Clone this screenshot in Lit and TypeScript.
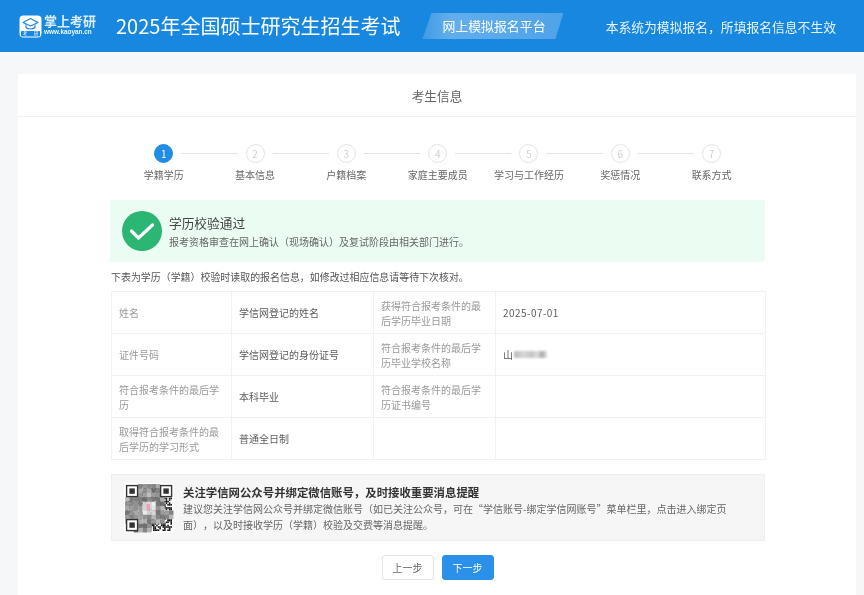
import { LitElement, html, css, svg } from 'lit';
import { customElement } from 'lit/decorators.js';

const STEPS = ['学籍学历', '基本信息', '户籍档案', '家庭主要成员', '学习与工作经历', '奖惩情况', '联系方式'];

const ROWS = [
  ['姓名', '学信网登记的姓名', '获得符合报考条件的最后学历毕业日期', '2025-07-01'],
  ['证件号码', '学信网登记的身份证号', '符合报考条件的最后学历毕业学校名称', 'blur'],
  ['符合报考条件的最后学历', '本科毕业', '符合报考条件的最后学历证书编号', ''],
  ['取得符合报考条件的最后学历的学习形式', '普通全日制', '', ''],
];

// pseudo random, so the code looks the same on every render
function noise(x: number, y: number) {
  const v = Math.sin(x * 12.9898 + y * 78.233) * 43758.5453;
  return v - Math.floor(v);
}

function qrCells() {
  const size = 29;
  const cell = 46 / size;
  const out = [];
  const inFinder = (x: number, y: number) =>
    (x < 8 && y < 8) || (x >= size - 8 && y < 8) || (x < 8 && y >= size - 8);

  for (let y = 0; y < size; y++) {
    for (let x = 0; x < size; x++) {
      if (inFinder(x, y)) continue;
      if (noise(x, y) > 0.5) {
        out.push(svg`<rect x=${2 + x * cell} y=${2 + y * cell} width=${cell} height=${cell} fill="#111"></rect>`);
      }
    }
  }
  // the pixelated part over the code: a cross of grey blocks, light in the middle
  const block = 4.4;
  for (let y = 0; y < 11; y++) {
    for (let x = 0; x < 11; x++) {
      const dx = Math.abs(x - 5);
      const dy = Math.abs(y - 5);
      const band = dx < 4 && dy < 4;
      const arm = (y < 2 && x > 2 && x < 8) || (x < 2 && y > 2 && y < 9) || (y > 7 && x > 1 && x < 6) || (x > 8 && y > 5 && y < 8);
      if (!band && !arm) continue;
      const centre = dx < 2 && dy < 2;
      const g = centre ? 205 + Math.round(noise(x, y) * 35) : Math.round(105 + noise(x + 3, y + 9) * 85);
      out.push(svg`<rect x=${1 + x * block} y=${1 + y * block} width=${block + 0.1} height=${block + 0.1} fill=${`rgb(${g},${g},${g})`}></rect>`);
    }
  }
  out.push(svg`<rect x="22.6" y="21" width="3.4" height="6" fill="#f0a0b4"></rect>`);
  return out;
}

function finder(x: number, y: number) {
  return svg`
    <rect x=${x + 0.6} y=${y + 0.6} width="11" height="11" fill="#fff" stroke="#333" stroke-width="1.4"></rect>
    <rect x=${x + 3.4} y=${y + 3.4} width="5.4" height="5.4" fill="#333"></rect>`;
}

@customElement('app-root')
export class AppRoot extends LitElement {
  static styles = css`
    :host {
      display: block;
      height: 595px;
      overflow: hidden;
      background: #f6f7f8;
      font-family: "Noto Sans CJK SC", "Liberation Sans", sans-serif;
      color: #555;
      text-spacing-trim: space-all;
      filter: blur(0.3px);
    }

    .top {
      display: flex;
      align-items: center;
      height: 52px;
      padding: 0 28px 0 19px;
      box-sizing: border-box;
      background: #1787e0;
      color: #fff;
    }

    .logo {
      display: flex;
      align-items: center;
      gap: 2px;
      width: 97px;
      flex: none;
    }

    .logo svg {
      width: 23px;
      height: 23px;
      flex: none;
    }

    .logo-text {
      display: flex;
      flex-direction: column;
      gap: 1px;
      width: 52px;
      margin-bottom: 2px;
    }

    .logo-name {
      font-size: 13px;
      line-height: 12px;
      font-weight: 700;
      white-space: nowrap;
      color: #dcedfb;
    }

    .logo-url {
      font-family: "Liberation Sans", sans-serif;
      font-size: 6.4px;
      line-height: 8px;
      font-weight: 700;
      white-space: nowrap;
      color: #eef6fd;
    }

    .title {
      font-size: 20px;
      line-height: 28px;
      white-space: nowrap;
    }

    .tag {
      width: 141px;
      height: 26px;
      margin: 0 0 0 22px;
      padding-left: 20px;
      box-sizing: border-box;
      font-size: 12.9px;
      line-height: 26px;
      white-space: nowrap;
      background: linear-gradient(90deg, #3f9ae6, #62aeec 20%, #4fa3e9);
      clip-path: polygon(9px 0, 100% 0, 133px 100%, 0 100%);
    }

    .notice {
      margin-left: auto;
      font-size: 12.8px;
      white-space: nowrap;
      color: #e8f3fd;
    }

    .card {
      margin: 22px 8px 0 18px;
      height: 521px;
      background: #fff;
    }

    .card-head {
      height: 42px;
      line-height: 43px;
      border-bottom: 1px solid #f0f0f0;
      text-align: center;
      font-size: 12.7px;
      color: #666;
    }

    .steps {
      display: grid;
      grid-template-columns: repeat(7, 91.33px);
      padding: 27px 0 0 100px;
    }

    .step {
      display: flex;
      flex-direction: column;
      align-items: center;
    }

    .step-head {
      display: flex;
      align-items: center;
      width: 100%;
      height: 19px;
    }

    .step-head::before,
    .step-head::after {
      content: '';
      flex: 1;
      height: 1px;
      background: #e4e4e4;
    }

    .step-head::before {
      margin-right: 8px;
    }

    .step-head::after {
      margin-left: 8px;
    }

    .step:first-child .step-head::before,
    .step:last-child .step-head::after {
      visibility: hidden;
    }

    .dot {
      width: 19px;
      height: 19px;
      box-sizing: border-box;
      border: 1px solid #e4e4e4;
      border-radius: 50%;
      text-align: center;
      font-size: 10px;
      line-height: 17px;
      color: #cfcfcf;
    }

    .step.on .dot {
      background: #1f8ce6;
      border-color: #1f8ce6;
      color: #fff;
    }

    .step-label {
      margin-top: 4px;
      font-size: 10px;
      line-height: 15px;
      white-space: nowrap;
      color: #666;
    }

    .body {
      margin: 18px 91px 0 92px;
    }

    .alert {
      display: flex;
      align-items: center;
      height: 62px;
      padding-left: 12px;
      box-sizing: border-box;
      border-radius: 2px;
      background: #ebfdf3;
    }

    .alert svg {
      width: 40px;
      height: 40px;
      flex: none;
      margin-right: 7px;
    }

    .alert-title {
      font-size: 12.7px;
      line-height: 18px;
      color: #444;
    }

    .alert-sub {
      margin-top: 3px;
      font-size: 10px;
      line-height: 14px;
      color: #666;
    }

    .hint {
      margin: 8px 0 7px 1px;
      font-size: 9.95px;
      line-height: 14px;
      white-space: nowrap;
      color: #555;
    }

    table {
      width: 654px;
      margin-left: 1px;
      border-collapse: collapse;
      table-layout: fixed;
      font-size: 10px;
      line-height: 15px;
    }

    td {
      height: 42px;
      padding: 0 7px;
      border: 1px solid #f1f1f1;
      box-sizing: border-box;
    }

    .k {
      color: #999;
    }

    .v {
      color: #5c5c5c;
    }

    .date {
      letter-spacing: 0.45px;
    }

    .masked {
      display: flex;
      align-items: center;
    }

    .smudge {
      width: 33px;
      height: 7px;
      margin-left: 1px;
      background: linear-gradient(90deg, #bbb, #d6d6d6 30%, #c4c4c4 55%, #dedede 70%, #aaa 85%, #e2e2e2);
      filter: blur(1px);
    }

    .qr-box {
      display: flex;
      align-items: flex-start;
      height: 67px;
      margin: 14px 0 0 1px;
      padding-top: 8px;
      box-sizing: border-box;
      border: 1px solid #eee;
      background: #f6f6f6;
    }

    .qr {
      width: 50px;
      height: 50px;
      flex: none;
      margin: 0 9px 0 12px;
      background: #fff;
      filter: blur(0.35px);
    }

    .qr-title {
      font-size: 11.4px;
      line-height: 18px;
      font-weight: 700;
      color: #333;
      white-space: nowrap;
    }

    .qr-text {
      width: 548px;
      font-size: 10px;
      line-height: 16px;
      color: #666;
    }

    .actions {
      display: flex;
      justify-content: center;
      gap: 8px;
      margin-top: 14px;
    }

    button {
      width: 52px;
      height: 25px;
      padding: 0;
      border: 1px solid #e4e4e4;
      border-radius: 3px;
      background: #fff;
      color: #666;
      font-family: inherit;
      font-size: 10px;
    }

    button.primary {
      border-color: #2a90e8;
      background: #2a90e8;
      color: #fff;
    }
  `;

  renderLogo() {
    return html`
      <svg viewBox="0 0 23 23">
        <rect x="0.5" y="0.5" width="22" height="22" rx="4" fill="#fff"></rect>
        <path d="M11.5 3.5 L19 7.5 L11.5 11 L4 7.5 Z" fill="#fff" stroke="#1787e0" stroke-width="1.1" stroke-linejoin="round"></path>
        <path d="M7 9.5 V12.5 C9 14.4 14 14.4 16 12.5 V9.5" fill="none" stroke="#1787e0" stroke-width="1.1"></path>
        <rect x="2" y="16" width="19" height="5.4" rx="1" fill="#1787e0"></rect>
        <text x="6" y="20.4" font-size="4.2" fill="#fff" text-anchor="middle">考</text>
        <text x="17" y="20.4" font-size="4.2" fill="#fff" text-anchor="middle">研</text>
      </svg>
    `;
  }

  renderValue(value: string) {
    if (value === 'blur') {
      return html`<div class="masked"><span>山</span><span class="smudge"></span></div>`;
    }
    if (/^\d/.test(value)) {
      return html`<span class="date">${value}</span>`;
    }
    return value;
  }

  render() {
    return html`
      <header class="top">
        <div class="logo">
          ${this.renderLogo()}
          <div class="logo-text">
            <span class="logo-name">掌上考研</span>
            <span class="logo-url">www.kaoyan.cn</span>
          </div>
        </div>
        <div class="title">2025年全国硕士研究生招生考试</div>
        <div class="tag">网上模拟报名平台</div>
        <div class="notice">本系统为模拟报名，所填报名信息不生效</div>
      </header>

      <main class="card">
        <div class="card-head">考生信息</div>

        <div class="steps">
          ${STEPS.map((label, i) => html`
            <div class="step ${i === 0 ? 'on' : ''}">
              <div class="step-head"><span class="dot">${i + 1}</span></div>
              <div class="step-label">${label}</div>
            </div>
          `)}
        </div>

        <div class="body">
          <div class="alert">
            <svg viewBox="0 0 40 40">
              <circle cx="20" cy="20" r="20" fill="#2bb673"></circle>
              <path d="M9.5 20 L16.5 27 L30.5 14" fill="none" stroke="#fff" stroke-width="3.2" stroke-linecap="round" stroke-linejoin="round"></path>
            </svg>
            <div>
              <div class="alert-title">学历校验通过</div>
              <div class="alert-sub">报考资格审查在网上确认（现场确认）及复试阶段由相关部门进行。</div>
            </div>
          </div>

          <div class="hint">下表为学历（学籍）校验时读取的报名信息，如修改过相应信息请等待下次核对。</div>

          <table>
            <colgroup>
              <col style="width: 120px" />
              <col style="width: 142px" />
              <col style="width: 122px" />
              <col style="width: 270px" />
            </colgroup>
            ${ROWS.map((row) => html`
              <tr>
                <td class="k">${row[0]}</td>
                <td class="v">${row[1]}</td>
                <td class="k">${row[2]}</td>
                <td class="v">${this.renderValue(row[3])}</td>
              </tr>
            `)}
          </table>

          <div class="qr-box">
            <svg class="qr" viewBox="0 0 50 50">
              ${qrCells()}
              ${finder(2, 2)}
              ${finder(36, 2)}
              ${finder(2, 36)}
            </svg>
            <div>
              <div class="qr-title">关注学信网公众号并绑定微信账号，及时接收重要消息提醒</div>
              <div class="qr-text">建议您关注学信网公众号并绑定微信账号（如已关注公众号，可在“学信账号-绑定学信网账号”菜单栏里，点击进入绑定页面），以及时接收学历（学籍）校验及交费等消息提醒。</div>
            </div>
          </div>

          <div class="actions">
            <button>上一步</button>
            <button class="primary">下一步</button>
          </div>
        </div>
      </main>
    `;
  }
}
